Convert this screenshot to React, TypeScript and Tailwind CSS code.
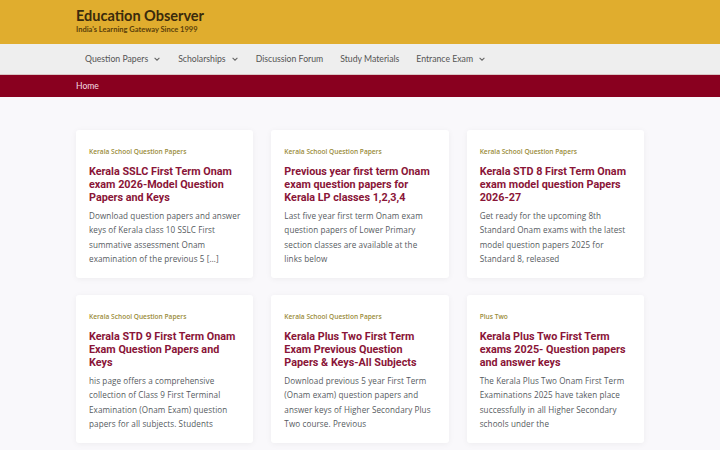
import React from "react";

type Post = {
  category: string;
  title: string;
  excerpt: string;
};

const posts: Post[] = [
  {
    category: "Kerala School Question Papers",
    title: "Kerala SSLC First Term Onam exam 2026-Model Question Papers and Keys",
    excerpt:
      "Download question papers and answer keys of Kerala class 10 SSLC First summative assessment Onam examination of the previous 5 […]",
  },
  {
    category: "Kerala School Question Papers",
    title: "Previous year first term Onam exam question papers for Kerala LP classes 1,2,3,4",
    excerpt:
      "Last five year first term Onam exam question papers of Lower Primary section classes are available at the links below",
  },
  {
    category: "Kerala School Question Papers",
    title: "Kerala STD 8 First Term Onam exam model question Papers 2026-27",
    excerpt:
      "Get ready for the upcoming 8th Standard Onam exams with the latest model question papers 2025 for Standard 8, released",
  },
  {
    category: "Kerala School Question Papers",
    title: "Kerala STD 9 First Term Onam Exam Question Papers and Keys",
    excerpt:
      "his page offers a comprehensive collection of Class 9 First Terminal Examination (Onam Exam) question papers for all subjects. Students",
  },
  {
    category: "Kerala School Question Papers",
    title: "Kerala Plus Two First Term Exam Previous Question Papers & Keys-All Subjects",
    excerpt:
      "Download previous 5 year First Term (Onam exam) question papers and answer keys of Higher Secondary Plus Two course. Previous",
  },
  {
    category: "Plus Two",
    title: "Kerala Plus Two First Term exams 2025- Question papers and answer keys",
    excerpt:
      "The Kerala Plus Two Onam First Term Examinations 2025 have taken place successfully in all Higher Secondary schools under the",
  },
];

const navItems = [
  { label: "Question Papers", menu: true },
  { label: "Scholarships", menu: true },
  { label: "Discussion Forum", menu: false },
  { label: "Study Materials", menu: false },
  { label: "Entrance Exam", menu: true },
];

const Chevron = () => (
  <svg width="8" height="8" viewBox="0 0 10 10" className="ml-[5px]">
    <path d="M2 3.5 L5 6.5 L8 3.5" fill="none" stroke="#666" strokeWidth="1.3" />
  </svg>
);

const PostCard: React.FC<{ post: Post }> = ({ post }) => (
  <article className="bg-white rounded-[3px] shadow-[0_1px_6px_rgba(0,0,0,0.05)] px-[13px] pt-[17px] pb-[14px] h-[148px]">
    <div className="text-[6.6px] font-semibold text-[#9a8c3a] leading-[10px]">{post.category}</div>
    <h2 className="mt-[8px] font-['Roboto',sans-serif] text-[10.8px] font-bold leading-[13px] text-[#8a1538]">
      {post.title}
    </h2>
    <p className="mt-[5px] text-[8.1px] leading-[14.3px] text-[#555a60] tracking-[0.1px]">{post.excerpt}</p>
  </article>
);

const App: React.FC = () => {
  return (
    <div className="min-h-[450px] bg-[#f9f8fb] font-['Open_Sans',sans-serif]">
      <header className="bg-[#e0ad2e] h-[44px]">
        <div className="mx-auto w-[568px] pt-[7px]">
          <div className="font-['Lato',sans-serif] text-[14.5px] font-bold leading-[18px] text-[#3a2a0c]">
            Education Observer
          </div>
          <div className="font-['Lato',sans-serif] text-[7.5px] font-bold leading-[9px] text-[#5a3f0a]">
            India's Learning Gateway Since 1999
          </div>
        </div>
      </header>
      <nav className="bg-[#eeeeee] h-[31px] border-b border-[#d9c5c5]">
        <ul className="mx-auto w-[568px] flex items-center h-full pl-[9px] gap-[17px]">
          {navItems.map((item) => (
            <li
              key={item.label}
              className="flex items-center font-['Lato',sans-serif] text-[8.7px] text-[#555]"
            >
              {item.label}
              {item.menu && <Chevron />}
            </li>
          ))}
        </ul>
      </nav>
      <div className="bg-[#89001f] h-[22px]">
        <div className="mx-auto w-[568px] flex items-center h-full font-['Lato',sans-serif] text-[8.6px] text-[#f3dbe0]">
          Home
        </div>
      </div>
      <main className="mx-auto w-[568px] pt-[33px] grid grid-cols-3 gap-x-[18px] gap-y-[17px]">
        {posts.map((post) => (
          <PostCard key={post.title} post={post} />
        ))}
      </main>
    </div>
  );
};

export default App;
